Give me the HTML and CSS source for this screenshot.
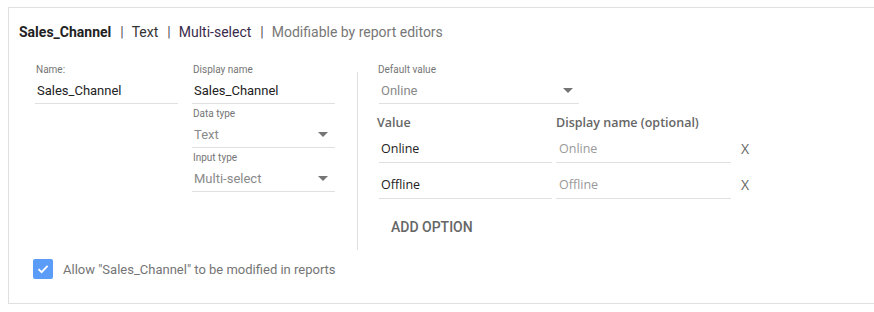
FILE: index.html
```html
<!DOCTYPE html>
<html>
<head>
<meta charset="utf-8">
<link rel="stylesheet" href="styles.css">
</head>
<body>
<div class="card">
  <div class="header">
    <span class="h-name">Sales_Channel</span><span class="sep">|</span><span class="h-item">Text</span><span class="sep">|</span><span class="h-item h-purple">Multi-select</span><span class="sep">|</span><span class="h-muted">Modifiable by report editors</span>
  </div>
  <div class="body">
    <div class="col col1">
      <div class="field">
        <div class="label">Name:</div>
        <div class="input">Sales_Channel</div>
      </div>
    </div>
    <div class="col col2">
      <div class="field">
        <div class="label">Display name</div>
        <div class="input">Sales_Channel</div>
      </div>
      <div class="field">
        <div class="label">Data type</div>
        <div class="input select">Text<span class="arrow"></span></div>
      </div>
      <div class="field">
        <div class="label">Input type</div>
        <div class="input select">Multi-select<span class="arrow"></span></div>
      </div>
    </div>
    <div class="divider"></div>
    <div class="right">
      <div class="field default">
        <div class="label">Default value</div>
        <div class="input select">Online<span class="arrow"></span></div>
      </div>
      <div class="opt-head">
        <div class="oh-value">Value</div>
        <div class="oh-name">Display name (optional)</div>
      </div>
      <div class="opt-list">
        <div class="opt-row">
          <div class="opt-value">Online</div>
          <div class="opt-name">Online</div>
          <div class="opt-x">X</div>
        </div>
        <div class="opt-row">
          <div class="opt-value">Offline</div>
          <div class="opt-name">Offline</div>
          <div class="opt-x">X</div>
        </div>
      </div>
      <div class="add">ADD OPTION</div>
    </div>
  </div>
  <div class="allow">
    <span class="checkbox"><svg width="14" height="14" viewBox="0 0 14 14"><path d="M2.5 7.2 L5.6 10.2 L11.6 3.8" fill="none" stroke="#fff" stroke-width="1.8"/></svg></span>
    <span class="allow-text">Allow "Sales_Channel" to be modified in reports</span>
  </div>
</div>
</body>
</html>
```
FILE: styles.css
```css
html, body {
  margin: 0;
  padding: 0;
  background: #fff;
  overflow: hidden;
}
body {
  padding: 7px 0 0 8px;
  font-family: Roboto, "Liberation Sans", sans-serif;
}
.card {
  width: 865px;
  height: 295px;
  border: 1px solid #e0e0e0;
  border-right: none;
  position: relative;
}
.header {
  padding: 15px 0 0 10px;
  height: 18px;
  line-height: 18px;
  font-size: 14px;
  color: #333;
  white-space: nowrap;
}
.h-name { font-weight: 700; color: #222; }
.h-purple { color: #3a2a4a; }
.sep { color: #555; margin: 0 8px 0 9px; }
.h-muted { color: #777; }
.body {
  display: flex;
  margin-top: 22px;
  padding-left: 26px;
}
.col { display: flex; flex-direction: column; gap: 3px; }
.col1 { width: 143px; margin-right: 14px; }
.col2 { width: 143px; }
.field { display: flex; flex-direction: column; }
.label {
  height: 14px;
  line-height: 14px;
  font-size: 10px;
  color: #757575;
  padding-left: 1px;
}
.input {
  height: 26px;
  border-bottom: 1px solid #e0e0e0;
  font-size: 13px;
  line-height: 27px;
  color: #222;
  padding-left: 2px;
  position: relative;
}
.select { color: #8a8a8a; }
.arrow {
  position: absolute;
  right: 7px;
  top: 11px;
  width: 0;
  height: 0;
  border-left: 5px solid transparent;
  border-right: 5px solid transparent;
  border-top: 5px solid #757575;
}
.default .arrow { right: 6px; }
.divider {
  width: 1px;
  background: #e0e0e0;
  margin: 9px 0 0 22px;
  height: 178px;
}
.right {
  margin-left: 19px;
  display: flex;
  flex-direction: column;
}
.default { width: 202px; }
.default .input { margin-left: 2px; }
.opt-head {
  display: flex;
  margin-top: 10px;
  height: 18px;
  line-height: 18px;
  font-family: "Open Sans", sans-serif;
  font-weight: 600;
  font-size: 12.5px;
  color: #666;
}
.oh-value { width: 179px; }
.opt-list {
  display: flex;
  flex-direction: column;
  gap: 8px;
  margin-top: 3px;
}
.opt-row {
  display: flex;
  height: 28px;
  font-family: "Open Sans", sans-serif;
  font-size: 12.5px;
}
.opt-value, .opt-name {
  height: 27px;
  line-height: 27px;
  border-bottom: 1px solid #e0e0e0;
}
.opt-value {
  width: 171px;
  margin-left: 2px;
  padding-left: 2px;
  color: #222;
}
.opt-name {
  width: 172px;
  margin-left: 4px;
  padding-left: 3px;
  color: #999;
}
.opt-x {
  height: 27px;
  line-height: 27px;
  margin-left: 10px;
  color: #666;
  font-size: 14px;
}
.add {
  margin-top: 18px;
  margin-left: 14px;
  height: 20px;
  line-height: 20px;
  font-size: 14px;
  font-weight: 500;
  color: #666;
}
.allow {
  display: flex;
  align-items: center;
  position: absolute;
  left: 24px;
  top: 251px;
}
.checkbox {
  width: 20px;
  height: 20px;
  border-radius: 2px;
  background: #5b9cf8;
  display: flex;
  align-items: center;
  justify-content: center;
}
.allow-text {
  margin-left: 10px;
  font-size: 13px;
  color: #757575;
}
```
